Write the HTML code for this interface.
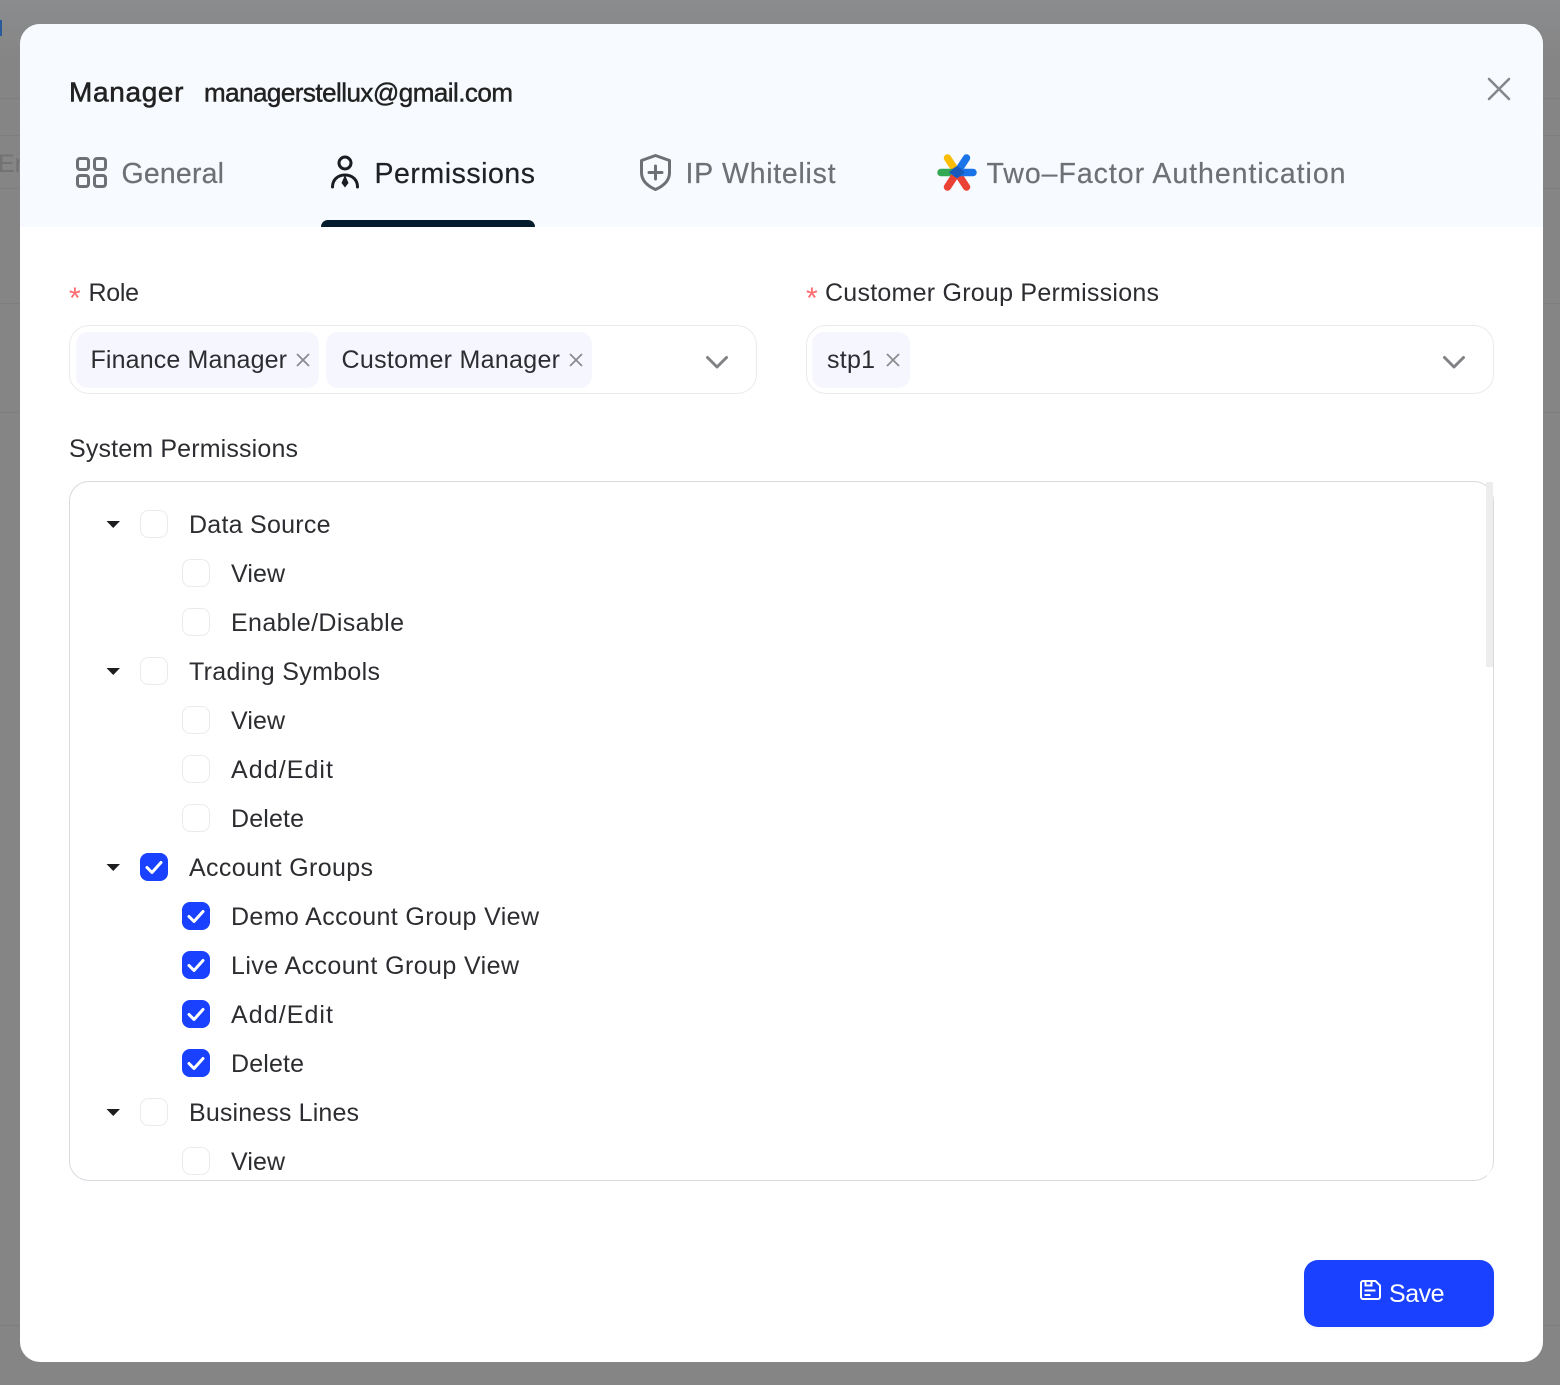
<!DOCTYPE html>
<html><head><meta charset="utf-8"><style>
html,body{margin:0;padding:0;width:1560px;height:1385px;overflow:hidden;background:#858585}
.b{position:absolute}
svg{position:absolute;left:0;top:0}
text{font-family:"Liberation Sans",sans-serif;font-size:25px;fill:#2c2d30}
</style></head><body>
<div class="b" style="left:0;top:0;width:1560px;height:60px;background:linear-gradient(#8b8c8e,#858585)"></div>
<div class="b" style="left:0;top:98px;width:1560px;height:1px;background:#7e7e7e"></div>
<div class="b" style="left:0;top:135px;width:1560px;height:1px;background:#7e7e7e"></div>
<div class="b" style="left:0;top:188px;width:1560px;height:1px;background:#7e7e7e"></div>
<div class="b" style="left:0;top:303px;width:1560px;height:1px;background:#7e7e7e"></div>
<div class="b" style="left:0;top:412px;width:1560px;height:1px;background:#7e7e7e"></div>
<div class="b" style="left:0;top:1325px;width:1560px;height:1px;background:#7e7e7e"></div>
<div class="b" style="left:0;top:20px;width:2px;height:16px;background:#2a5a9a"></div>
<div class="b" style="left:-2px;top:149px;width:22px;height:30px;overflow:hidden;font:25px/30px 'Liberation Sans',sans-serif;color:#727272">Er</div>
<div class="b" style="left:20px;top:24px;width:1523px;height:1338px;background:#fff;border-radius:20px;overflow:hidden">
  <div class="b" style="left:0;top:0;width:1523px;height:203px;background:#f7fbff"></div>
  <div class="b" style="left:301px;top:196px;width:214px;height:7px;background:#051c2c;border-radius:8px 8px 0 0"></div>
</div>
<div class="b" style="left:69px;top:325px;width:686px;height:67px;border:1px solid #ebebef;border-radius:20px"></div>
<div class="b" style="left:806px;top:325px;width:686px;height:67px;border:1px solid #ebebef;border-radius:20px"></div>
<div class="b" style="left:76px;top:332px;width:243px;height:56px;background:#f6f7fe;border-radius:12px"></div>
<div class="b" style="left:326px;top:332px;width:266px;height:56px;background:#f6f7fe;border-radius:12px"></div>
<div class="b" style="left:812px;top:332px;width:98px;height:56px;background:#f6f7fe;border-radius:12px"></div>
<div class="b" style="left:69px;top:481px;width:1423px;height:698px;border:1px solid #d9d9e0;border-radius:20px"></div>
<div class="b" style="left:1486px;top:480px;width:9px;height:16px;background:#fff"></div>
<div class="b" style="left:1487px;top:1165px;width:8px;height:17px;background:linear-gradient(rgba(255,255,255,0),#fff 60%)"></div>
<div class="b" style="left:1486px;top:482px;width:7px;height:185px;background:#ededed"></div>
<div class="b" style="left:1304px;top:1260px;width:190px;height:67px;background:#1941ff;border-radius:14px;box-shadow:0 2px 3px rgba(0,0,0,.04)"></div>

<svg width="1560" height="1385" viewBox="0 0 1560 1385" xmlns="http://www.w3.org/2000/svg">
<defs>
<symbol id="c" overflow="visible"><rect x="0.5" y="0.5" width="27" height="27" rx="8" fill="#fff" stroke="#ebebef"/></symbol>
<symbol id="k" overflow="visible"><rect width="28" height="28" rx="8" fill="#1941ff"/><path d="M7 14.500l5 5 9-10" fill="none" stroke="#fff" stroke-width="3" stroke-linecap="round" stroke-linejoin="round"/></symbol>
<symbol id="a" overflow="visible"><path d="M0 0h13.500l-6.750 7z" fill="#1d1d1f"/></symbol>
</defs>

<text x="69" y="101.500" textLength="114.500" lengthAdjust="spacing" style="font-size:28px;fill:#222;stroke:#222;stroke-width:.55">Manager</text>
<text x="204" y="101.500" textLength="309" lengthAdjust="spacing" style="font-size:26px;fill:#222;stroke:#222;stroke-width:.45">managerstellux@gmail.com</text>
<path d="M1489 79l20 20M1509 79l-20 20" stroke="#85888b" stroke-width="2.600" stroke-linecap="round" fill="none"/>

<!-- tabs -->
<g fill="none" stroke="#6d7175" stroke-width="3">
<rect x="77.500" y="158.500" width="11" height="11" rx="2.500"/><rect x="94.500" y="158.500" width="11" height="11" rx="2.500"/>
<rect x="77.500" y="175.500" width="11" height="11" rx="2.500"/><rect x="94.500" y="175.500" width="11" height="11" rx="2.500"/>
</g>
<text x="121.500" y="183" textLength="102.500" lengthAdjust="spacing" style="font-size:28.500px;fill:#6d7175;stroke:#6d7175;stroke-width:.2">General</text>

<g fill="none" stroke="#1b1d20" stroke-width="3" stroke-linecap="round">
<circle cx="345" cy="163" r="6"/>
<path d="M332.500 187c0-7 5-12 12.500-12s12.500 5 12.500 12"/>
</g>
<path d="M345 175l3.500 8-3.500 4.500-3.500-4.500z" fill="#1b1d20"/>
<text x="374.500" y="183" textLength="160.500" lengthAdjust="spacing" style="font-size:28.500px;fill:#1f2124;stroke:#1f2124;stroke-width:.2">Permissions</text>

<path d="M655.500 155.500l14 5v12c0 8-6 13.500-14 17-8-3.500-14-9-14-17v-12z" fill="none" stroke="#6d7175" stroke-width="3" stroke-linejoin="round"/>
<path d="M655.500 166v13M649 172.500h13" stroke="#6d7175" stroke-width="3" stroke-linecap="round" fill="none"/>
<text x="685.500" y="183" textLength="150" lengthAdjust="spacing" style="font-size:28.500px;fill:#6d7175;stroke:#6d7175;stroke-width:.2">IP Whitelist</text>

<g stroke-width="7.500" stroke-linecap="round" fill="none">
<path d="M957 172.500l-9.500-14.500" stroke="#fbbc04"/>
<path d="M941 172.500H957" stroke="#34a853"/>
<path d="M957 172.500l-9.500 14.500" stroke="#ea4335"/>
<path d="M957 172.500l9.500 14.500" stroke="#ea4335"/>
<path d="M957 172.500l9.500-14.500" stroke="#1a73e8"/>
<path d="M957 172.500h16" stroke="#1a73e8"/>
</g>
<path d="M957 166l4 2.500 4 4-8 6-8-6 4-4z" fill="#185abc"/>
<text x="986.500" y="183" textLength="359" lengthAdjust="spacing" style="font-size:28.500px;fill:#6d7175;stroke:#6d7175;stroke-width:.2">Two–Factor Authentication</text>

<!-- form labels -->
<text x="69" y="308" style="fill:#ff6b70;font-size:30px">*</text>
<text x="88.500" y="301" textLength="50.500" lengthAdjust="spacing">Role</text>
<text x="806" y="308" style="fill:#ff6b70;font-size:30px">*</text>
<text x="825" y="301" textLength="334" lengthAdjust="spacing">Customer Group Permissions</text>

<text x="90.500" y="368" textLength="196.500" lengthAdjust="spacing">Finance Manager</text>
<path d="M297 354l12 12M309 354l-12 12" stroke="#8a8c8f" stroke-width="1.800" fill="none"/>
<text x="341.500" y="368" textLength="218.500" lengthAdjust="spacing">Customer Manager</text>
<path d="M570 354l12 12M582 354l-12 12" stroke="#8a8c8f" stroke-width="1.800" fill="none"/>
<text x="827" y="368" textLength="48" lengthAdjust="spacing">stp1</text>
<path d="M887 354l12 12M899 354l-12 12" stroke="#8a8c8f" stroke-width="1.800" fill="none"/>
<path d="M707.500 357.500l9.500 9.500 9.500-9.500" fill="none" stroke="#808285" stroke-width="3" stroke-linecap="round" stroke-linejoin="round"/>
<path d="M1444.500 357.500l9.500 9.500 9.500-9.500" fill="none" stroke="#808285" stroke-width="3" stroke-linecap="round" stroke-linejoin="round"/>

<text x="69" y="457" textLength="229" lengthAdjust="spacing">System Permissions</text>

<!-- tree -->
<use href="#a" x="106.500" y="521"/><use href="#c" x="140" y="510"/>
<text x="189" y="533" textLength="141.500" lengthAdjust="spacing">Data Source</text>
<use href="#c" x="182" y="559"/><text x="231" y="582" textLength="54" lengthAdjust="spacing">View</text>
<use href="#c" x="182" y="608"/><text x="231" y="631" textLength="173" lengthAdjust="spacing">Enable/Disable</text>

<use href="#a" x="106.500" y="668"/><use href="#c" x="140" y="657"/>
<text x="189" y="680" textLength="191" lengthAdjust="spacing">Trading Symbols</text>
<use href="#c" x="182" y="706"/><text x="231" y="729" textLength="54" lengthAdjust="spacing">View</text>
<use href="#c" x="182" y="755"/><text x="231" y="778" textLength="102" lengthAdjust="spacing">Add/Edit</text>
<use href="#c" x="182" y="804"/><text x="231" y="827" textLength="73" lengthAdjust="spacing">Delete</text>

<use href="#a" x="106.500" y="864"/><use href="#k" x="140" y="853"/>
<text x="189" y="876" textLength="184" lengthAdjust="spacing">Account Groups</text>
<use href="#k" x="182" y="902"/><text x="231" y="925" textLength="308" lengthAdjust="spacing">Demo Account Group View</text>
<use href="#k" x="182" y="951"/><text x="231" y="974" textLength="288" lengthAdjust="spacing">Live Account Group View</text>
<use href="#k" x="182" y="1000"/><text x="231" y="1023" textLength="102" lengthAdjust="spacing">Add/Edit</text>
<use href="#k" x="182" y="1049"/><text x="231" y="1072" textLength="73" lengthAdjust="spacing">Delete</text>

<use href="#a" x="106.500" y="1109"/><use href="#c" x="140" y="1098"/>
<text x="189" y="1121" textLength="170" lengthAdjust="spacing">Business Lines</text>
<use href="#c" x="182" y="1147"/><text x="231" y="1170" textLength="54" lengthAdjust="spacing">View</text>

<!-- save -->
<path d="M1363 1281h12.500l4.500 4.500V1297a2 2 0 0 1-2 2h-15a2 2 0 0 1-2-2v-14a2 2 0 0 1 2-2z" fill="none" stroke="#fff" stroke-width="2"/>
<path d="M1365.500 1281v4.500h6V1281M1364.500 1290.500h11M1364.500 1295h6" fill="none" stroke="#fff" stroke-width="2"/>
<text x="1389" y="1302" textLength="55.500" lengthAdjust="spacing" style="fill:#fff;font-size:25px">Save</text>
</svg>
</body></html>
